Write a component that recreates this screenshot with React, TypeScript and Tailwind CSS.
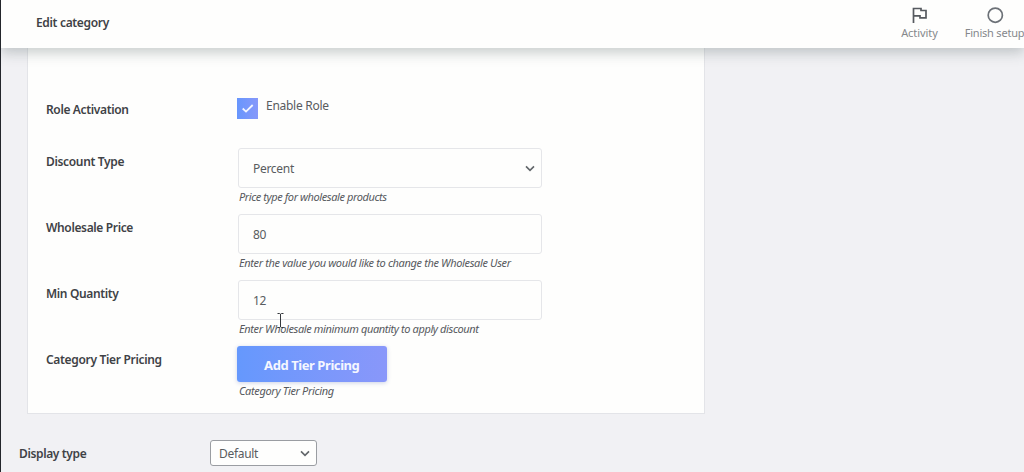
import type { ReactNode } from "react";

function Chevron({ className }: { className: string }) {
  return (
    <svg className={className} viewBox="0 0 10 7" fill="none" stroke="#63676b" strokeWidth="1.6">
      <path d="M1 1.4 5 5.4 9 1.4" />
    </svg>
  );
}

function Row({ label, tracking, height, labelTop = "pt-[6px]", children }: { label: string; tracking: string; height: string; labelTop?: string; children: ReactNode }) {
  return (
    <div className={`flex ${height}`}>
      <div className={`w-[191px] shrink-0 text-[12px] leading-4 font-semibold text-[#3f4246] whitespace-nowrap ${labelTop} ${tracking}`}>{label}</div>
      <div>{children}</div>
    </div>
  );
}

function Note({ text, tracking }: { text: string; tracking: string }) {
  return <p className={`ml-[2px] text-[11px] leading-[18px] italic text-[#56595d] whitespace-nowrap ${tracking}`}>{text}</p>;
}

function Field({ value, select = false }: { value: string; select?: boolean }) {
  return (
    <div className="ml-px flex h-10 w-[304px] items-center justify-between rounded-[3px] border border-[#e5e6e9] bg-[#fefefd] pr-[6px] pl-[14px] text-[12px] tracking-[-0.3px] text-[#595c60]">
      <span className="pt-px">{value}</span>
      {select && <Chevron className="h-[7px] w-[10px]" />}
    </div>
  );
}

export default function App() {
  return (
    <div className="relative flex h-[472px] w-[1024px] flex-col overflow-hidden border-l border-[#23262b] bg-[#f1f1f4] font-['Noto_Sans','Open_Sans',sans-serif]">
      <header className="relative z-10 flex h-12 shrink-0 items-start bg-[#fefefd] shadow-[0_5px_12px_0px_rgba(80,95,95,0.3)]">
        <h1 className="mt-[15px] ml-[35px] text-[12px] leading-4 font-semibold tracking-[-0.33px] text-[#3f4246]">Edit category</h1>
        <div className="mt-[6px] ml-auto flex w-[37px] flex-col items-center">
          <svg className="h-[18px] w-5" viewBox="0 0 20 18" fill="none" stroke="#565a5f" strokeWidth="1.7">
            <path d="M3.5 17V2.5H11v2h5v7.3h-6v-2H3.5" />
          </svg>
          <span className="mt-px text-[11px] leading-4 tracking-[-0.05px] text-[#85888c]">Activity</span>
        </div>
        <div className="mt-[6px] ml-[26px] flex w-[60px] flex-col items-center">
          <svg className="ml-px h-[18px] w-[18px]" viewBox="0 0 18 18" fill="none" stroke="#6c7177" strokeWidth="1.7">
            <circle cx="9.3" cy="9.2" r="7.1" />
          </svg>
          <span className="mt-px ml-px text-[11px] leading-4 tracking-[-0.2px] whitespace-nowrap text-[#85888c]">Finish setup</span>
        </div>
      </header>

      <main className="flex flex-col">
        <section className="ml-[26px] h-[366px] w-[678px] border-x border-b border-[#e3e4e8] bg-[#fefefd] pt-[49px] pl-[18px]">
          <Row label="Role Activation" tracking="tracking-[-0.36px]" height="h-[51px]" labelTop="pt-[5px]">
            <div className="flex">
              <span className="mt-px flex h-[21px] w-[21px] items-center justify-center bg-linear-to-r from-[#6796fd] to-[#8698fa]">
                <svg className="h-[9px] w-3" viewBox="0 0 12 9" fill="none" stroke="#f3f6ff" strokeWidth="1.8">
                  <path d="M.7 4.5 4 7.6 10.7 1" />
                </svg>
              </span>
              <span className="mt-px ml-2 text-[12px] leading-4 tracking-[-0.28px] text-[#595c60]">Enable Role</span>
            </div>
          </Row>
          <Row label="Discount Type" tracking="tracking-[-0.34px]" height="h-[66px]">
            <Field value="Percent" select />
            <Note text="Price type for wholesale products" tracking="tracking-[-0.41px]" />
          </Row>
          <Row label="Wholesale Price" tracking="tracking-[-0.36px]" height="h-[66px]">
            <Field value="80" />
            <Note text="Enter the value you would like to change the Wholesale User" tracking="tracking-[-0.35px]" />
          </Row>
          <Row label="Min Quantity" tracking="tracking-[-0.36px]" height="h-[66px]">
            <Field value="12" />
            <Note text="Enter Wholesale minimum quantity to apply discount" tracking="tracking-[-0.38px]" />
          </Row>
          <Row label="Category Tier Pricing" tracking="tracking-[-0.32px]" height="h-[60px]">
            <button className="-ml-[0.5px] block h-[36px] w-[150.5px] rounded-[3px] bg-linear-to-r from-[#6598fd] to-[#8997fa] text-[13px] leading-[38px] font-bold tracking-[-0.43px] text-[#f5f7ff] shadow-[0_1px_4px_rgba(90,110,180,0.3)]">Add Tier Pricing</button>
            <Note text="Category Tier Pricing" tracking="tracking-[-0.34px]" />
          </Row>
        </section>
        <div className="mt-[26px] flex items-center pl-[18px]">
          <span className="w-[191px] pt-px text-[12px] leading-4 font-semibold tracking-[-0.36px] text-[#3f4246]">Display type</span>
          <div className="flex h-[26px] w-[107px] items-center justify-between rounded-[3px] border border-[#9a9da2] bg-[#fefefd] pr-[6px] pl-[8px] text-[12px] tracking-[-0.3px] text-[#595c60]">
            <span className="pt-px">Default</span>
            <Chevron className="h-[7px] w-[10px]" />
          </div>
        </div>
      </main>
      <svg className="absolute top-[313px] left-[276px] z-20 h-[15px] w-[7px]" viewBox="0 0 7 15" fill="none" stroke="#34373b" strokeWidth="1">
        <path d="M.5 .5h2.2l.8 .7 .8-.7h2.2M3.5 1v13M.5 14.5h2.2l.8-.7 .8.7h2.2" />
      </svg>
    </div>
  );
}
